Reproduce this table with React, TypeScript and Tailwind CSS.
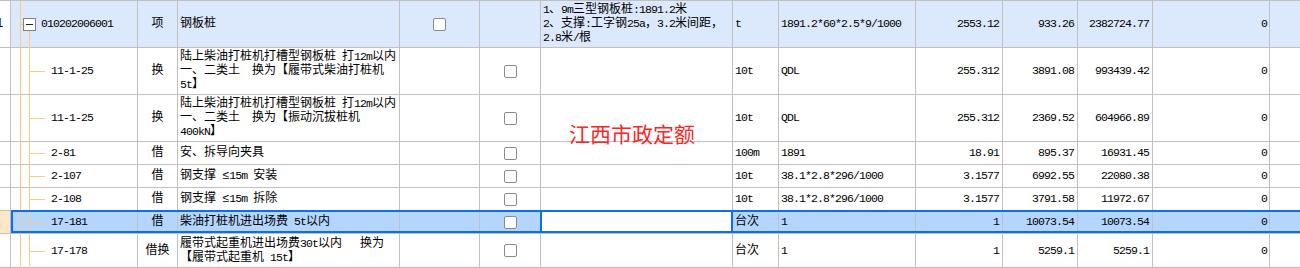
import React from "react";

type RowData = {
  code: string;
  kind: string;
  name: string[];
  desc?: string[];
  unit: string;
  expr: string;
  qty: string;
  price: string;
  total: string;
  height: string;
  top?: boolean;
  selected?: boolean;
  last?: boolean;
};

const rows: RowData[] = [
  {
    code: "010202006001",
    kind: "项",
    name: ["钢板桩"],
    desc: ["1、9m三型钢板桩:1891.2米", "2、支撑:工字钢25a，3.2米间距，", "2.8米/根"],
    unit: "t",
    expr: "1891.2*60*2.5*9/1000",
    qty: "2553.12",
    price: "933.26",
    total: "2382724.77",
    height: "h-[47px]",
    top: true,
  },
  {
    code: "11-1-25",
    kind: "换",
    name: ["陆上柴油打桩机打槽型钢板桩 打12m以内", "一、二类土　换为【履带式柴油打桩机", "5t】"],
    unit: "10t",
    expr: "QDL",
    qty: "255.312",
    price: "3891.08",
    total: "993439.42",
    height: "h-[47px]",
  },
  {
    code: "11-1-25",
    kind: "换",
    name: ["陆上柴油打桩机打槽型钢板桩 打12m以内", "一、二类土　换为【振动沉拔桩机", "400kN】"],
    unit: "10t",
    expr: "QDL",
    qty: "255.312",
    price: "2369.52",
    total: "604966.89",
    height: "h-[47px]",
  },
  {
    code: "2-81",
    kind: "借",
    name: ["安、拆导向夹具"],
    unit: "100m",
    expr: "1891",
    qty: "18.91",
    price: "895.37",
    total: "16931.45",
    height: "h-[23px]",
  },
  {
    code: "2-107",
    kind: "借",
    name: ["钢支撑 ≤15m 安装"],
    unit: "10t",
    expr: "38.1*2.8*296/1000",
    qty: "3.1577",
    price: "6992.55",
    total: "22080.38",
    height: "h-[23px]",
  },
  {
    code: "2-108",
    kind: "借",
    name: ["钢支撑 ≤15m 拆除"],
    unit: "10t",
    expr: "38.1*2.8*296/1000",
    qty: "3.1577",
    price: "3791.58",
    total: "11972.67",
    height: "h-[23px]",
  },
  {
    code: "17-181",
    kind: "借",
    name: ["柴油打桩机进出场费 5t以内"],
    unit: "台次",
    expr: "1",
    qty: "1",
    price: "10073.54",
    total: "10073.54",
    height: "h-[23px]",
    selected: true,
  },
  {
    code: "17-178",
    kind: "借换",
    name: ["履带式起重机进出场费30t以内   换为", "【履带式起重机 15t】"],
    unit: "台次",
    expr: "1",
    qty: "1",
    price: "5259.1",
    total: "5259.1",
    height: "h-[34px]",
    last: true,
  },
];

// ascii runs get narrowed so they sit at half the width of a CJK glyph
function T({ s }: { s: string }) {
  return (
    <>
      {s.split(/([\x20-\x7e]+)/).map((p, i) =>
        /^[\x20-\x7e]+$/.test(p) ? (
          <span key={i} className="text-[11.5px] tracking-[-0.9px] whitespace-pre">
            {p}
          </span>
        ) : (
          <React.Fragment key={i}>{p}</React.Fragment>
        )
      )}
    </>
  );
}

function Check() {
  return <span className="block w-[13px] h-[13px] rounded-[2px] border border-[#8a8a8a] bg-white" />;
}

function Lines({ lines }: { lines: string[] }) {
  return (
    <div className="leading-[14px] whitespace-nowrap">
      {lines.map((l, i) => (
        <div key={i}>
          <T s={l} />
        </div>
      ))}
    </div>
  );
}

const cell = "border-r border-[#c0c0c0] flex items-center overflow-hidden min-w-0";

function Tree({ r, bg }: { r: RowData; bg: string }) {
  return (
    <div className={`${bg} border-r border-[#c0c0c0] flex items-center relative ${r.top ? "pl-[30px]" : "pl-[40px]"}`}>
      <span className="absolute left-[9px] top-0 bottom-[-1px] w-px bg-[#ffc97f]" />
      {r.top ? (
        <>
          <span className="absolute left-[9px] top-[23px] w-[3px] h-px bg-[#ffc97f]" />
          <span className="absolute left-[18px] top-[30px] bottom-[-1px] w-px bg-[#ffc97f]" />
          <span className="absolute left-[12px] top-[17px] w-[13px] h-[13px] border border-[#808080] bg-white flex items-center justify-center">
            <span className="block w-[7px] h-px bg-[#222]" />
          </span>
        </>
      ) : (
        <>
          <span className="absolute left-[18px] top-0 bottom-[-1px] w-px bg-[#ffc97f]" />
          <span className="absolute left-[18px] top-1/2 w-[16px] h-px bg-[#ffc97f]" />
        </>
      )}
      <span className="relative whitespace-nowrap">
        <T s={r.code} />
      </span>
    </div>
  );
}

function Row({ r }: { r: RowData }) {
  const bg = r.top ? "bg-[#dce8fc]" : r.selected ? "bg-[#b4d5fe]" : "bg-white";
  return (
    <div
      className={`relative grid grid-cols-[11px_127px_40px_222px_80px_61px_192px_46px_137px_87px_75px_75px_117px_1fr] border-b ${
        r.last ? "border-[#f2a5a5]" : "border-[#c0c0c0]"
      } ${r.height}`}
    >
      <div className={`${cell} ${r.selected ? "bg-[#fee6c8]" : "bg-white"}`}>
        {r.top && <span className="-ml-[4px]">1</span>}
      </div>
      <Tree r={r} bg={bg} />
      <div className={`${bg} ${cell} justify-center`}>{r.kind}</div>
      <div className={`${bg} ${cell} pl-[2px]`}>
        <Lines lines={r.name} />
      </div>
      <div className={`${bg} ${cell} justify-center`}>{r.top && <Check />}</div>
      <div className={`${bg} ${cell} justify-center`}>{!r.top && <Check />}</div>
      <div className={`${r.selected ? "bg-white" : bg} ${cell} pl-[2px] relative overflow-visible`}>
        {r.desc && <Lines lines={r.desc} />}
        {r.selected && (
          <span className="absolute left-[-1px] right-[-1px] top-[-1px] bottom-0 border-2 border-[#0a6ef0]" />
        )}
      </div>
      <div className={`${bg} ${cell} pl-[2px]`}>
        <T s={r.unit} />
      </div>
      <div className={`${bg} ${cell} pl-[2px] whitespace-nowrap`}>
        <T s={r.expr} />
      </div>
      <div className={`${bg} ${cell} justify-end pr-[3px]`}>
        <T s={r.qty} />
      </div>
      <div className={`${bg} ${cell} justify-end pr-[3px]`}>
        <T s={r.price} />
      </div>
      <div className={`${bg} ${cell} justify-end pr-[3px]`}>
        <T s={r.total} />
      </div>
      <div className={`${bg} ${cell} justify-end pr-[2px]`}>
        <T s="0" />
      </div>
      <div className={bg} />
      {r.selected && (
        <span className="absolute left-[11px] right-[-4px] top-[-1px] bottom-0 border-2 border-[#0a6ef0] pointer-events-none" />
      )}
    </div>
  );
}

export default function App() {
  return (
    <div className="relative w-[1300px] h-[268px] overflow-hidden bg-white text-[12px] text-black border-t border-[#c0c0c0] font-[family-name:'Liberation_Mono','Noto_Sans_CJK_SC',monospace]">
      {rows.map((r, i) => (
        <Row key={i} r={r} />
      ))}
      <div className="absolute left-[569px] top-[121px] text-[21px] leading-[22px] text-[#ff2424] font-[family-name:'Noto_Sans_CJK_SC',sans-serif] pointer-events-none">
        江西市政定额
      </div>
    </div>
  );
}
